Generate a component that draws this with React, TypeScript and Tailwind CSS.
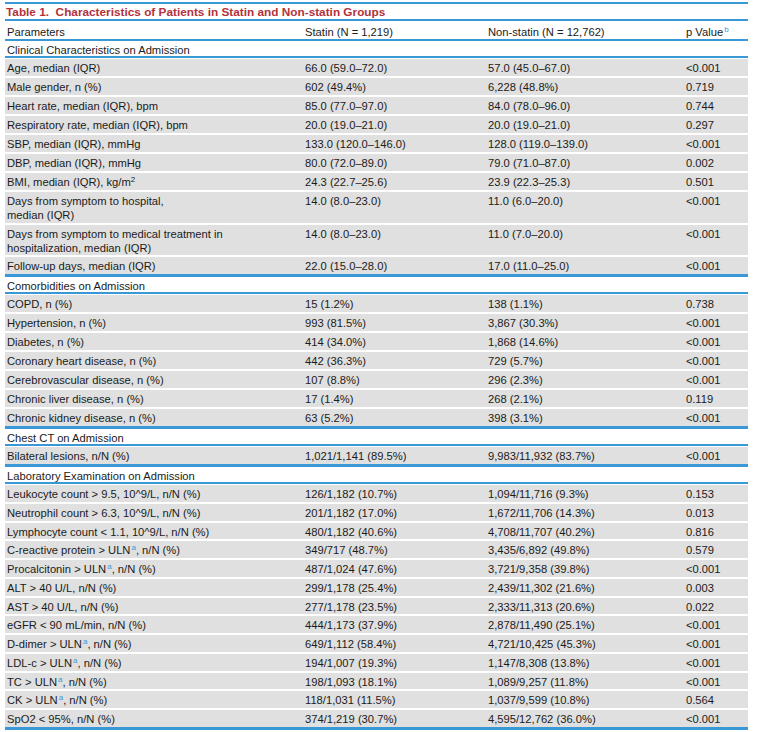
import React from "react";

type Row = { p: React.ReactNode; s: string; n: string; v: string; dbl?: boolean };

const Sup = ({ c }: { c: string }) => (
  <sup className="text-[8px] text-[#3b9ad8] top-[-4px] ml-[1px]">{c}</sup>
);

const clinical: Row[] = [
  { p: "Age, median (IQR)", s: "66.0 (59.0–72.0)", n: "57.0 (45.0–67.0)", v: "<0.001" },
  { p: "Male gender, n (%)", s: "602 (49.4%)", n: "6,228 (48.8%)", v: "0.719" },
  { p: "Heart rate, median (IQR), bpm", s: "85.0 (77.0–97.0)", n: "84.0 (78.0–96.0)", v: "0.744" },
  { p: "Respiratory rate, median (IQR), bpm", s: "20.0 (19.0–21.0)", n: "20.0 (19.0–21.0)", v: "0.297" },
  { p: "SBP, median (IQR), mmHg", s: "133.0 (120.0–146.0)", n: "128.0 (119.0–139.0)", v: "<0.001" },
  { p: "DBP, median (IQR), mmHg", s: "80.0 (72.0–89.0)", n: "79.0 (71.0–87.0)", v: "0.002" },
  {
    p: (
      <>
        BMI, median (IQR), kg/m<sup className="text-[8px] top-[-4px]">2</sup>
      </>
    ),
    s: "24.3 (22.7–25.6)",
    n: "23.9 (22.3–25.3)",
    v: "0.501",
  },
  {
    p: (
      <>
        Days from symptom to hospital,
        <br />
        median (IQR)
      </>
    ),
    s: "14.0 (8.0–23.0)",
    n: "11.0 (6.0–20.0)",
    v: "<0.001",
    dbl: true,
  },
  {
    p: (
      <>
        Days from symptom to medical treatment in
        <br />
        hospitalization, median (IQR)
      </>
    ),
    s: "14.0 (8.0–23.0)",
    n: "11.0 (7.0–20.0)",
    v: "<0.001",
    dbl: true,
  },
  { p: "Follow-up days, median (IQR)", s: "22.0 (15.0–28.0)", n: "17.0 (11.0–25.0)", v: "<0.001" },
];

const comorb: Row[] = [
  { p: "COPD, n (%)", s: "15 (1.2%)", n: "138 (1.1%)", v: "0.738" },
  { p: "Hypertension, n (%)", s: "993 (81.5%)", n: "3,867 (30.3%)", v: "<0.001" },
  { p: "Diabetes, n (%)", s: "414 (34.0%)", n: "1,868 (14.6%)", v: "<0.001" },
  { p: "Coronary heart disease, n (%)", s: "442 (36.3%)", n: "729 (5.7%)", v: "<0.001" },
  { p: "Cerebrovascular disease, n (%)", s: "107 (8.8%)", n: "296 (2.3%)", v: "<0.001" },
  { p: "Chronic liver disease, n (%)", s: "17 (1.4%)", n: "268 (2.1%)", v: "0.119" },
  { p: "Chronic kidney disease, n (%)", s: "63 (5.2%)", n: "398 (3.1%)", v: "<0.001" },
];

const chest: Row[] = [
  { p: "Bilateral lesions, n/N (%)", s: "1,021/1,141 (89.5%)", n: "9,983/11,932 (83.7%)", v: "<0.001" },
];

const uln = (pre: string, post: string) => (
  <>
    {pre} ULN
    <Sup c="a" />
    {post}
  </>
);

const lab: Row[] = [
  { p: "Leukocyte count > 9.5, 10^9/L, n/N (%)", s: "126/1,182 (10.7%)", n: "1,094/11,716 (9.3%)", v: "0.153" },
  { p: "Neutrophil count > 6.3, 10^9/L, n/N (%)", s: "201/1,182 (17.0%)", n: "1,672/11,706 (14.3%)", v: "0.013" },
  { p: "Lymphocyte count < 1.1, 10^9/L, n/N (%)", s: "480/1,182 (40.6%)", n: "4,708/11,707 (40.2%)", v: "0.816" },
  { p: uln("C-reactive protein >", ", n/N (%)"), s: "349/717 (48.7%)", n: "3,435/6,892 (49.8%)", v: "0.579" },
  { p: uln("Procalcitonin >", ", n/N (%)"), s: "487/1,024 (47.6%)", n: "3,721/9,358 (39.8%)", v: "<0.001" },
  { p: "ALT > 40 U/L, n/N (%)", s: "299/1,178 (25.4%)", n: "2,439/11,302 (21.6%)", v: "0.003" },
  { p: "AST > 40 U/L, n/N (%)", s: "277/1,178 (23.5%)", n: "2,333/11,313 (20.6%)", v: "0.022" },
  { p: "eGFR < 90 mL/min, n/N (%)", s: "444/1,173 (37.9%)", n: "2,878/11,490 (25.1%)", v: "<0.001" },
  { p: uln("D-dimer >", ", n/N (%)"), s: "649/1,112 (58.4%)", n: "4,721/10,425 (45.3%)", v: "<0.001" },
  { p: uln("LDL-c >", ", n/N (%)"), s: "194/1,007 (19.3%)", n: "1,147/8,308 (13.8%)", v: "<0.001" },
  { p: uln("TC >", ", n/N (%)"), s: "198/1,093 (18.1%)", n: "1,089/9,257 (11.8%)", v: "<0.001" },
  { p: uln("CK >", ", n/N (%)"), s: "118/1,031 (11.5%)", n: "1,037/9,599 (10.8%)", v: "0.564" },
  { p: "SpO2 < 95%, n/N (%)", s: "374/1,219 (30.7%)", n: "4,595/12,762 (36.0%)", v: "<0.001" },
];

const GRID = "grid grid-cols-[298px_183px_198px_64px]";

function DataRow({ r, compact }: { r: Row; compact?: boolean }) {
  const h = r.dbl ? "h-[30.5px]" : compact ? "h-[16.75px]" : "h-[17px]";
  return (
    <div className={`${GRID} bg-[#e0e0e0] leading-[14px] mt-[2px] first:mt-[1px] pt-[2px] ${h}`}>
      <div className="pl-[2px]">{r.p}</div>
      <div className="pl-[2px]">{r.s}</div>
      <div className="pl-[2px]">{r.n}</div>
      <div className="pl-[2px]">{r.v}</div>
    </div>
  );
}

function Section({ title, rows, compact }: { title: string; rows: Row[]; compact?: boolean }) {
  return (
    <div>
      <div className="h-[17px] pl-[2px] pt-[2px] leading-[14px] border-b-2 border-[#3a98d6]">{title}</div>
      <div className="flex flex-col border-b-[3px] border-[#3a98d6]">
        {rows.map((r, i) => (
          <DataRow key={i} r={r} compact={compact} />
        ))}
      </div>
    </div>
  );
}

export default function App() {
  return (
    <div
      className="bg-white w-[758px] h-[732px] overflow-hidden text-[11.2px] text-[#1b1b1b]"
      style={{ fontFamily: '"Liberation Sans", Arial, Helvetica, sans-serif' }}
    >
      <div className="ml-[5px] w-[743px] pt-[2px]">
        <div className="border-t-2 border-b-2 border-[#3a98d6] h-[19px] pl-[1px] pt-[1px] font-bold text-[11.8px] leading-[14px] text-[#b3323c] whitespace-pre">
          {"Table 1.  Characteristics of Patients in Statin and Non-statin Groups"}
        </div>
        <div className={`${GRID} h-[20px] pt-[4px] leading-[14px] border-b-2 border-[#3a98d6]`}>
          <div className="pl-[2px]">Parameters</div>
          <div className="pl-[2px]">Statin (N = 1,219)</div>
          <div className="pl-[2px]">Non-statin (N = 12,762)</div>
          <div className="pl-[2px]">
            p Value
            <Sup c="b" />
          </div>
        </div>
        <Section title="Clinical Characteristics on Admission" rows={clinical} />
        <Section title="Comorbidities on Admission" rows={comorb} />
        <Section title="Chest CT on Admission" rows={chest} />
        <Section title="Laboratory Examination on Admission" rows={lab} compact />
        <div className="pl-[2px] pt-[3px] text-[10px] leading-[12px] text-[#999] whitespace-nowrap">
          ALT = alanine aminotransferase; AST = aspartate aminotransferase; BMI = body mass index; CK = creatine kinase; COPD = chronic obstructive pulmonary disease
        </div>
      </div>
    </div>
  );
}
